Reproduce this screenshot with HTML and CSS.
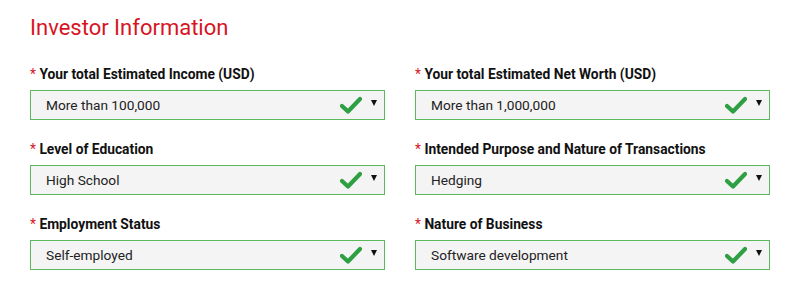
FILE: index.html
```html
<!DOCTYPE html>
<html>
<head>
  <title>Investor Information</title>
  <link rel="stylesheet" href="styles.css">
</head>
<body>
  <div class="container">
    <h2 class="title">Investor Information</h2>

    <div class="grid">
      <div class="field">
        <label><span class="req">*</span> Your total Estimated Income (USD)</label>
        <div class="select">
          <span class="value">More than 100,000</span>
          <svg class="check" width="22" height="18" viewBox="0 0 22 18"><path d="M2 10 L8 15.5 L20 3" fill="none" stroke="#2ea043" stroke-width="4.2" stroke-linecap="round" stroke-linejoin="round"/></svg>
          <span class="arrow"></span>
        </div>
      </div>

      <div class="field">
        <label><span class="req">*</span> Your total Estimated Net Worth (USD)</label>
        <div class="select">
          <span class="value">More than 1,000,000</span>
          <svg class="check" width="22" height="18" viewBox="0 0 22 18"><path d="M2 10 L8 15.5 L20 3" fill="none" stroke="#2ea043" stroke-width="4.2" stroke-linecap="round" stroke-linejoin="round"/></svg>
          <span class="arrow"></span>
        </div>
      </div>

      <div class="field">
        <label><span class="req">*</span> Level of Education</label>
        <div class="select">
          <span class="value">High School</span>
          <svg class="check" width="22" height="18" viewBox="0 0 22 18"><path d="M2 10 L8 15.5 L20 3" fill="none" stroke="#2ea043" stroke-width="4.2" stroke-linecap="round" stroke-linejoin="round"/></svg>
          <span class="arrow"></span>
        </div>
      </div>

      <div class="field">
        <label><span class="req">*</span> Intended Purpose and Nature of Transactions</label>
        <div class="select">
          <span class="value">Hedging</span>
          <svg class="check" width="22" height="18" viewBox="0 0 22 18"><path d="M2 10 L8 15.5 L20 3" fill="none" stroke="#2ea043" stroke-width="4.2" stroke-linecap="round" stroke-linejoin="round"/></svg>
          <span class="arrow"></span>
        </div>
      </div>

      <div class="field">
        <label><span class="req">*</span> Employment Status</label>
        <div class="select">
          <span class="value">Self-employed</span>
          <svg class="check" width="22" height="18" viewBox="0 0 22 18"><path d="M2 10 L8 15.5 L20 3" fill="none" stroke="#2ea043" stroke-width="4.2" stroke-linecap="round" stroke-linejoin="round"/></svg>
          <span class="arrow"></span>
        </div>
      </div>

      <div class="field">
        <label><span class="req">*</span> Nature of Business</label>
        <div class="select">
          <span class="value">Software development</span>
          <svg class="check" width="22" height="18" viewBox="0 0 22 18"><path d="M2 10 L8 15.5 L20 3" fill="none" stroke="#2ea043" stroke-width="4.2" stroke-linecap="round" stroke-linejoin="round"/></svg>
          <span class="arrow"></span>
        </div>
      </div>
    </div>
  </div>
</body>
</html>
```

FILE: styles.css
```css
body {
  margin: 0;
  background: #fff;
  font-family: Roboto, "Liberation Sans", Arial, sans-serif;
  color: #222;
}

.container {
  width: 740px;
  padding: 13px 30px 0 30px;
}

.title {
  margin: 0 0 22px 0;
  font-size: 22px;
  font-weight: 400;
  line-height: 30px;
  color: #d7141f;
}

.grid {
  display: grid;
  grid-template-columns: 355px 355px;
  column-gap: 30px;
  row-gap: 20px;
}

.field {
  display: flex;
  flex-direction: column;
  gap: 7px;
}

.field label {
  font-size: 13.8px;
  font-weight: 700;
  line-height: 18px;
  color: #111;
}

.req {
  color: #d7141f;
  font-weight: 400;
}

.select {
  height: 28px;
  display: flex;
  align-items: center;
  background: #f4f4f4;
  border: 1px solid #5cb85c;
  padding: 0 7px 0 15px;
}

.value {
  flex: 1;
  font-size: 13.7px;
  color: #222;
}

.check {
  margin-right: 9px;
}

.arrow {
  width: 0;
  height: 0;
  border-left: 3.5px solid transparent;
  border-right: 3.5px solid transparent;
  border-top: 6px solid #111;
  margin-top: -4px;
}
```
